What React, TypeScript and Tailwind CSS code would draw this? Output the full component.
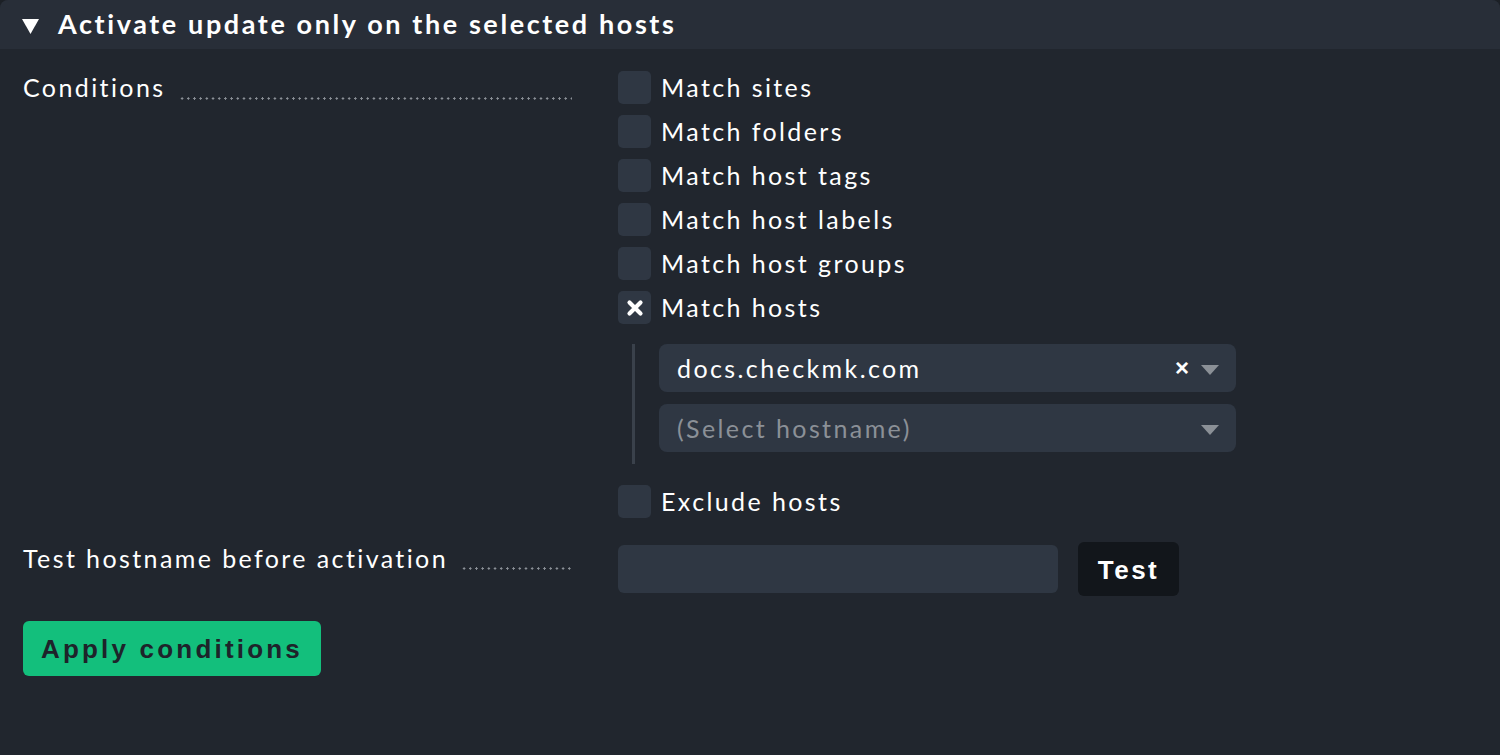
import React from "react";

const lato = { fontFamily: "Lato, 'Noto Sans', sans-serif" };
const arial = { fontFamily: "'Liberation Sans', Arial, sans-serif" };

function Leader() {
  return (
    <div className="flex-1 ml-[13px] mb-[4px] self-end h-[3px] bg-[radial-gradient(circle,_#8b9097_1px,_transparent_1.3px)] bg-[length:6.2px_3px] bg-repeat-x" />
  );
}

function Checkbox({ label, checked }: { label: string; checked?: boolean }) {
  return (
    <div className="flex items-center h-[33px]">
      <div className="w-[33px] h-[33px] rounded-[5px] bg-[#2f3743] flex items-center justify-center">
        {checked && (
          <svg width="18" height="18" viewBox="0 0 18 18">
            <path d="M3.5 3.5 L14.5 14.5 M14.5 3.5 L3.5 14.5" stroke="white" strokeWidth="4.2" strokeLinecap="round" />
          </svg>
        )}
      </div>
      <span className="ml-[10px] text-[25px] tracking-[2.4px] text-white leading-none">{label}</span>
    </div>
  );
}

function Arrow() {
  return (
    <svg width="18" height="10" viewBox="0 0 18 10" className="ml-[12px] mt-[4px]">
      <path d="M0 0 L18 0 L9 10 Z" fill="#8b9097" />
    </svg>
  );
}

export default function App() {
  return (
    <div className="w-[1500px] h-[755px] bg-[#1c2026] overflow-hidden" style={lato}>
      <div className="w-full h-full rounded-t-[8px] bg-[#21262e] overflow-hidden">
        <div className="h-[49px] bg-[#282e38] flex items-center pl-[22px]">
          <svg width="17" height="15" viewBox="0 0 17 15" className="mt-[3px]">
            <path d="M0 0 L17 0 L8.5 15 Z" fill="white" />
          </svg>
          <span className="ml-[19px] mb-[2px] text-[27px] font-bold tracking-[2.6px] text-white leading-none">
            Activate update only on the selected hosts
          </span>
        </div>

        <div className="pl-[23px] pt-[22px]">
          {/* Conditions row */}
          <div className="flex">
            <div className="w-[549px] h-[33px] flex items-center shrink-0">
              <span className="text-[25px] tracking-[2.4px] text-white leading-none">Conditions</span>
              <Leader />
            </div>
            <div className="ml-[46px] flex flex-col">
              <div className="flex flex-col gap-[11px]">
                <Checkbox label="Match sites" />
                <Checkbox label="Match folders" />
                <Checkbox label="Match host tags" />
                <Checkbox label="Match host labels" />
                <Checkbox label="Match host groups" />
                <Checkbox label="Match hosts" checked />
              </div>
              <div className="flex mt-[20px] ml-[14px]">
                <div className="w-[3px] bg-[#3a414b]" />
                <div className="ml-[24px] flex flex-col gap-[12px] pb-[12px]">
                  <div className="w-[577px] h-[48px] rounded-[8px] bg-[#2f3743] flex items-center pl-[18px] pr-[17px]">
                    <span className="flex-1 text-[25px] tracking-[2.4px] text-white leading-none">docs.checkmk.com</span>
                    <span className="text-white text-[24px] leading-none font-bold" style={arial}>×</span>
                    <Arrow />
                  </div>
                  <div className="w-[577px] h-[48px] rounded-[8px] bg-[#2f3743] flex items-center pl-[18px] pr-[17px]">
                    <span className="flex-1 text-[25px] tracking-[2.4px] text-[#8b9097] leading-none">(Select hostname)</span>
                    <Arrow />
                  </div>
                </div>
              </div>
              <div className="mt-[21px]">
                <Checkbox label="Exclude hosts" />
              </div>
            </div>
          </div>

          {/* Test hostname row */}
          <div className="flex mt-[24px] items-start">
            <div className="w-[549px] h-[32px] flex items-center shrink-0">
              <span className="text-[25px] tracking-[2.4px] text-white leading-none">Test hostname before activation</span>
              <Leader />
            </div>
            <div className="ml-[46px] flex items-center">
              <div className="w-[440px] h-[48px] rounded-[6px] bg-[#2f3743]" />
              <button
                className="ml-[20px] w-[101px] h-[54px] pt-[3px] rounded-[6px] bg-[#12161b] text-white text-[26px] font-bold tracking-[2.5px] flex items-center justify-center"
                style={arial}
              >
                Test
              </button>
            </div>
          </div>

          <button
            className="mt-[25px] w-[298px] h-[55px] pt-[2px] rounded-[6px] bg-[#13bf7c] text-[#1e232a] text-[26px] font-bold tracking-[3.2px] flex items-center justify-center"
            style={arial}
          >
            Apply conditions
          </button>
        </div>
      </div>
    </div>
  );
}
